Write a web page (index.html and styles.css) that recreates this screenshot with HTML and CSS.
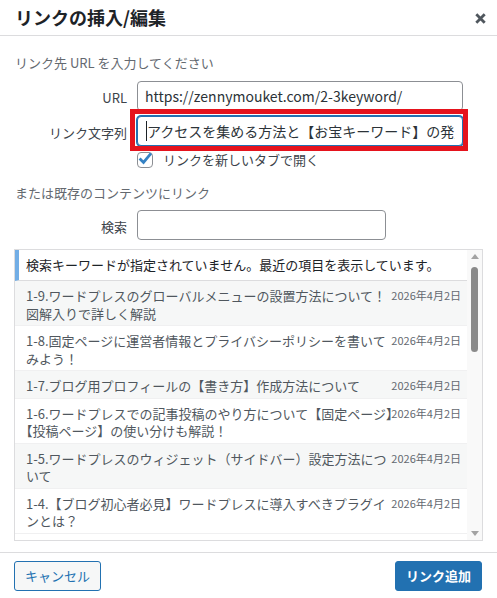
FILE: index.html
```html
<!DOCTYPE html>
<html lang="ja">
<head>
<meta charset="utf-8">
<title>リンクの挿入/編集</title>
<link rel="stylesheet" href="styles.css">
</head>
<body>
<div class="dialog">
  <div class="dialog-header">
    <h1 class="dialog-title">リンクの挿入/編集</h1>
    <button class="close-btn" type="button" aria-label="閉じる">
      <svg width="11" height="11" viewBox="0 0 11 11"><path d="M1.3 1.3 L9.7 9.7 M9.7 1.3 L1.3 9.7" stroke="#50575e" stroke-width="2.8" stroke-linecap="butt"/></svg>
    </button>
  </div>

  <div class="dialog-body">
    <p class="prompt">リンク先 URL を入力してください</p>

    <div class="field-row url-row">
      <label class="field-label">URL</label>
      <input class="field-input url-input" type="text" value="https://zennymouket.com/2-3keyword/">
    </div>

    <div class="field-row text-row">
      <label class="field-label">リンク文字列</label>
      <div class="focus-wrap">
        <input class="field-input text-input is-focused" type="text" value="アクセスを集める方法と【お宝キーワード】の発見方法">
        <span class="caret"></span>
      </div>
    </div>

    <div class="check-row">
      <span class="checkbox">
        <svg width="17" height="17" viewBox="0 0 17 17"><path d="M2.6 8.6 L6.5 12.5 L14 3.4" fill="none" stroke="#3582c4" stroke-width="2.8" stroke-linejoin="miter"/></svg>
      </span>
      <span class="check-label">リンクを新しいタブで開く</span>
    </div>

    <p class="prompt existing">または既存のコンテンツにリンク</p>

    <div class="field-row search-row">
      <label class="field-label">検索</label>
      <input class="field-input search-input" type="text" value="">
    </div>

    <div class="results">
      <ul class="results-list">
        <li class="notice">検索キーワードが指定されていません。最近の項目を表示しています。</li>
        <li class="item alt"><span class="item-title">1-9.ワードプレスのグローバルメニューの設置方法について！<br>図解入りで詳しく解説</span><span class="item-date">2026年4月2日</span></li>
        <li class="item"><span class="item-title">1-8.固定ページに運営者情報とプライバシーポリシーを書いて<br>みよう！</span><span class="item-date">2026年4月2日</span></li>
        <li class="item alt"><span class="item-title">1-7.ブログ用プロフィールの【書き方】作成方法について</span><span class="item-date">2026年4月2日</span></li>
        <li class="item"><span class="item-title">1-6.ワードプレスでの記事投稿のやり方について【固定ページ<span class="half">】</span><br><span class="half">【</span>投稿ページ】の使い分けも解説！</span><span class="item-date">2026年4月2日</span></li>
        <li class="item alt"><span class="item-title">1-5.ワードプレスのウィジェット（サイドバー）設定方法につ<br>いて</span><span class="item-date">2026年4月2日</span></li>
        <li class="item"><span class="item-title">1-4.【ブログ初心者必見】ワードプレスに導入すべきプラグイ<br>ンとは？</span><span class="item-date">2026年4月2日</span></li>
      </ul>
      <div class="scrollbar">
        <span class="sb-arrow"><svg width="8" height="5" viewBox="0 0 8 5"><path d="M0 5 L8 5 L4 0 Z" fill="#a3a3a3"/></svg></span>
        <span class="sb-thumb"></span>
        <span class="sb-space"></span>
        <span class="sb-arrow"><svg width="8" height="5" viewBox="0 0 8 5"><path d="M0 0 L8 0 L4 5 Z" fill="#a3a3a3"/></svg></span>
      </div>
    </div>
  </div>

  <div class="dialog-footer">
    <button class="btn btn-secondary" type="button">キャンセル</button>
    <button class="btn btn-primary" type="button">リンク追加</button>
  </div>

  <span class="highlight-box"></span>
</div>
</body>
</html>
```

FILE: styles.css
```css
* {
  box-sizing: border-box;
}

html, body {
  margin: 0;
  padding: 0;
  background: #ffffff;
}

body {
  font-family: "Noto Sans CJK JP", "Noto Sans", sans-serif;
  font-size: 13px;
  color: #2c3338;
}

.dialog {
  position: relative;
  width: 497px;
  height: 598px;
  display: flex;
  flex-direction: column;
  background: #ffffff;
  overflow: hidden;
}

/* header */
.dialog-header {
  height: 36px;
  border-bottom: 1px solid #dcdcde;
  display: flex;
  align-items: center;
  justify-content: space-between;
  padding: 0 11px 0 15px;
}

.dialog-title {
  margin: 0;
  font-size: 18px;
  font-weight: 700;
  line-height: 35px;
  color: #1d2327;
}

.close-btn {
  border: 0;
  background: transparent;
  padding: 0;
  margin: 1px 0 0 0;
  width: 11px;
  height: 11px;
  display: flex;
}

/* body */
.dialog-body {
  padding: 0 14px;
  display: flex;
  flex-direction: column;
}

.prompt {
  margin: 18px 0 0 1px;
  font-size: 13px;
  line-height: 18px;
  color: #646970;
}

.prompt.existing {
  margin-top: 16px;
}

.field-row {
  display: grid;
  grid-template-columns: 113px auto;
  column-gap: 10px;
  align-items: center;
}

.url-row {
  margin-top: 9px;
}

.text-row {
  margin-top: 5px;
}

.search-row {
  margin-top: 8px;
}

.field-label {
  text-align: right;
  font-size: 13px;
  line-height: 18px;
  color: #3c434a;
  padding-top: 3px;
}

.field-input {
  display: block;
  height: 30px;
  border: 1px solid #8c8f94;
  border-radius: 4px;
  padding: 0 7px;
  font-family: "Noto Sans CJK JP", "Noto Sans", sans-serif;
  font-size: 14px;
  color: #2c3338;
  background: #ffffff;
  outline: none;
}

.url-input,
.text-input {
  width: 326px;
}

.search-input {
  width: 249px;
}

.focus-wrap {
  position: relative;
  width: 326px;
}

.field-input.is-focused {
  border-color: #2271b1;
  box-shadow: 0 0 0 1px #2271b1;
  padding-left: 9px;
}

.caret {
  position: absolute;
  left: 9px;
  top: 5px;
  width: 1px;
  height: 20px;
  background: #1d2327;
}

.check-row {
  margin-top: 6px;
  padding-left: 123px;
  display: flex;
  align-items: center;
  gap: 10px;
  height: 16px;
}

.checkbox {
  width: 16px;
  height: 16px;
  border: 1px solid #8c8f94;
  border-radius: 4px;
  background: #ffffff;
  display: flex;
  align-items: center;
  justify-content: center;
  flex: none;
}

.checkbox svg {
  display: block;
  flex: none;
  margin-top: -3px;
  margin-left: 1px;
}

.check-label {
  font-size: 13px;
  line-height: 18px;
  color: #3c434a;
}

/* results */
.results {
  margin-top: 9px;
  height: 292px;
  border: 1px solid #dcdcde;
  display: flex;
}

.results-list {
  flex: 1;
  list-style: none;
  margin: 0;
  padding: 0;
  overflow: hidden;
}

.notice {
  border-left: 4px solid #72aee6;
  border-bottom: 1px solid #dcdcde;
  padding: 6px 7px;
  line-height: 18px;
  font-size: 13px;
  color: #1d2327;
}

.item {
  position: relative;
  padding: 6px 6px 3px 11px;
  border-bottom: 1px solid #f0f0f1;
  font-size: 13px;
  line-height: 17.5px;
  color: #50575e;
  background: #ffffff;
}

.item.alt {
  background: #f6f7f7;
}

.item-title {
  display: block;
  white-space: nowrap;
}

.half {
  font-feature-settings: "halt";
}

.item-date {
  position: absolute;
  right: 6px;
  top: 6px;
  font-size: 11px;
  line-height: 17.5px;
  color: #646970;
}

.scrollbar {
  width: 15px;
  background: #f9f9f9;
  display: flex;
  flex-direction: column;
  align-items: center;
}

.sb-arrow {
  height: 13px;
  display: flex;
  align-items: center;
  justify-content: center;
}

.sb-thumb {
  margin-top: 4px;
  width: 7px;
  height: 85px;
  border-radius: 4px;
  background: #8a8a8a;
}

.sb-space {
  flex: 1;
}

/* footer */
.dialog-footer {
  margin-top: auto;
  border-top: 1px solid #dcdcde;
  padding: 8px 15px 7px 14px;
  display: flex;
  justify-content: space-between;
}

.btn {
  height: 30px;
  padding: 0 10px;
  border: 1px solid #2271b1;
  border-radius: 3px;
  font-family: "Noto Sans CJK JP", "Noto Sans", sans-serif;
  font-size: 13px;
  line-height: 28px;
}

.btn-secondary {
  background: #f6f7f7;
  color: #2271b1;
}

.btn-primary {
  background: #2271b1;
  color: #ffffff;
  font-weight: 600;
}

/* annotation overlay */
.highlight-box {
  position: absolute;
  left: 130px;
  top: 109px;
  width: 338px;
  height: 42px;
  border: 5px solid #e5131d;
  pointer-events: none;
}
```
